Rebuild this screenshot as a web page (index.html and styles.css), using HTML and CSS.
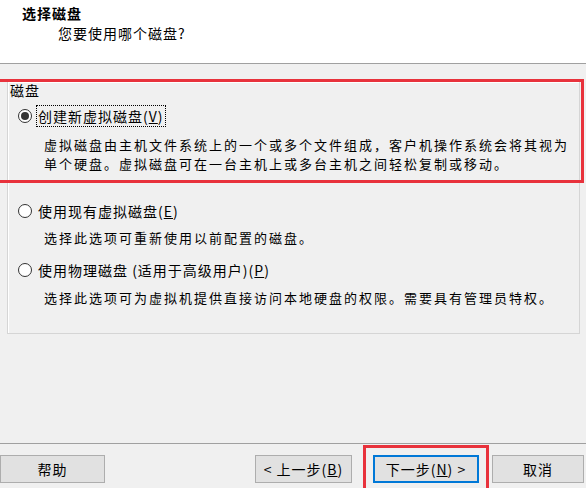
FILE: index.html
```html
<!DOCTYPE html>
<html lang="zh-CN">
<head>
  <meta charset="UTF-8" />
  <title>新建虚拟机向导</title>
  <link rel="stylesheet" href="styles.css">
</head>
<body>
  <div class="header">
    <div class="title">选择磁盘</div>
    <div class="subtitle">您要使用哪个磁盘?</div>
  </div>

  <div class="content">
    <div class="group">
      <div class="group-label">磁盘</div>

      <div class="option first">
        <span class="radio checked"></span>
        <span class="label focus">创建新虚拟磁盘(<u>V</u>)</span>
      </div>
      <div class="desc d1">虚拟磁盘由主机文件系统上的一个或多个文件组成，客户机操作系统会将其视为<br>单个硬盘。虚拟磁盘可在一台主机上或多台主机之间轻松复制或移动。</div>

      <div class="option second">
        <span class="radio"></span>
        <span class="label">使用现有虚拟磁盘(<u>E</u>)</span>
      </div>
      <div class="desc d2">选择此选项可重新使用以前配置的磁盘。</div>

      <div class="option third">
        <span class="radio"></span>
        <span class="label">使用物理磁盘 (适用于高级用户)(<u>P</u>)</span>
      </div>
      <div class="desc d3">选择此选项可为虚拟机提供直接访问本地硬盘的权限。需要具有管理员特权。</div>
    </div>
  </div>

  <div class="footer">
    <button class="btn help">帮助</button>
    <button class="btn back">&lt; 上一步(<u>B</u>)</button>
    <button class="btn next">下一步(<u>N</u>) &gt;</button>
    <button class="btn cancel">取消</button>
  </div>

  <div class="mark mark-group"></div>
  <div class="mark mark-next"></div>
</body>
</html>
```

FILE: styles.css
```css
* { box-sizing: border-box; }
body {
  margin: 0;
  width: 586px;
  height: 488px;
  overflow: hidden;
  background: #f0f0f0;
  color: #000;
  font-family: "Noto Sans CJK SC", "Noto Sans", sans-serif;
  font-size: 14px;
  letter-spacing: 1px;
  position: relative;
}
.header {
  background: #fff;
  height: 64px;
  border-bottom: 1px solid #a0a0a0;
  padding: 4px 0 0 22px;
}
.title {
  font-weight: bold;
  line-height: 18px;
}
.subtitle {
  padding-left: 36px;
  margin-top: 2px;
  line-height: 18px;
}
.content {
  padding: 17px 6px 0 7px;
}
.group {
  height: 253px;
  border: 1px solid #d5d5d5;
  box-shadow: inset 1px 1px 0 #fff;
}
.group-label {
  padding-left: 2px;
  line-height: 16px;
}
.option {
  display: flex;
  align-items: center;
  height: 22px;
  padding-left: 10px;
}
.option.first { margin-top: 7px; }
.option.second { margin-top: 27px; }
.option.third { margin-top: 12px; }
.radio {
  width: 14px;
  height: 14px;
  border: 1px solid #333;
  border-radius: 50%;
  background: #fff;
  margin-right: 5px;
  display: flex;
  align-items: center;
  justify-content: center;
}
.radio.checked::after {
  content: "";
  width: 8px;
  height: 8px;
  border-radius: 50%;
  background: #333;
}
.label {
  line-height: 20px;
  padding: 0 1px;
}
.label.focus {
  outline: 1px dotted #000;
  outline-offset: 0;
}
.desc {
  padding-left: 36px;
  font-size: 13px;
  letter-spacing: 2px;
  line-height: 19px;
}
.d1 { margin-top: 8px; }
.d2 { margin-top: 6px; }
.d3 { margin-top: 7px; }
.footer {
  margin-top: 109px;
  border-top: 1px solid #a0a0a0;
  padding-top: 11px;
  display: flex;
}
.btn {
  height: 28px;
  background: #e1e1e1;
  border: 1px solid #adadad;
  font-family: inherit;
  font-size: 14px;
  letter-spacing: 1px;
  color: #000;
  padding: 0;
}
.help { width: 105px; }
.back { width: 97px; margin-left: 150px; }
.next {
  width: 106px;
  margin-left: 21px;
  border-color: #0078d7;
  box-shadow: inset 0 0 0 1px #0078d7;
}
.cancel { width: 92px; margin-left: 13px; }
.mark {
  position: absolute;
  border: 3px solid #e8323c;
}
.mark-group {
  left: -6px;
  top: 79px;
  width: 590px;
  height: 104px;
}
.mark-next {
  left: 363px;
  top: 445px;
  width: 126px;
  height: 50px;
}
```
